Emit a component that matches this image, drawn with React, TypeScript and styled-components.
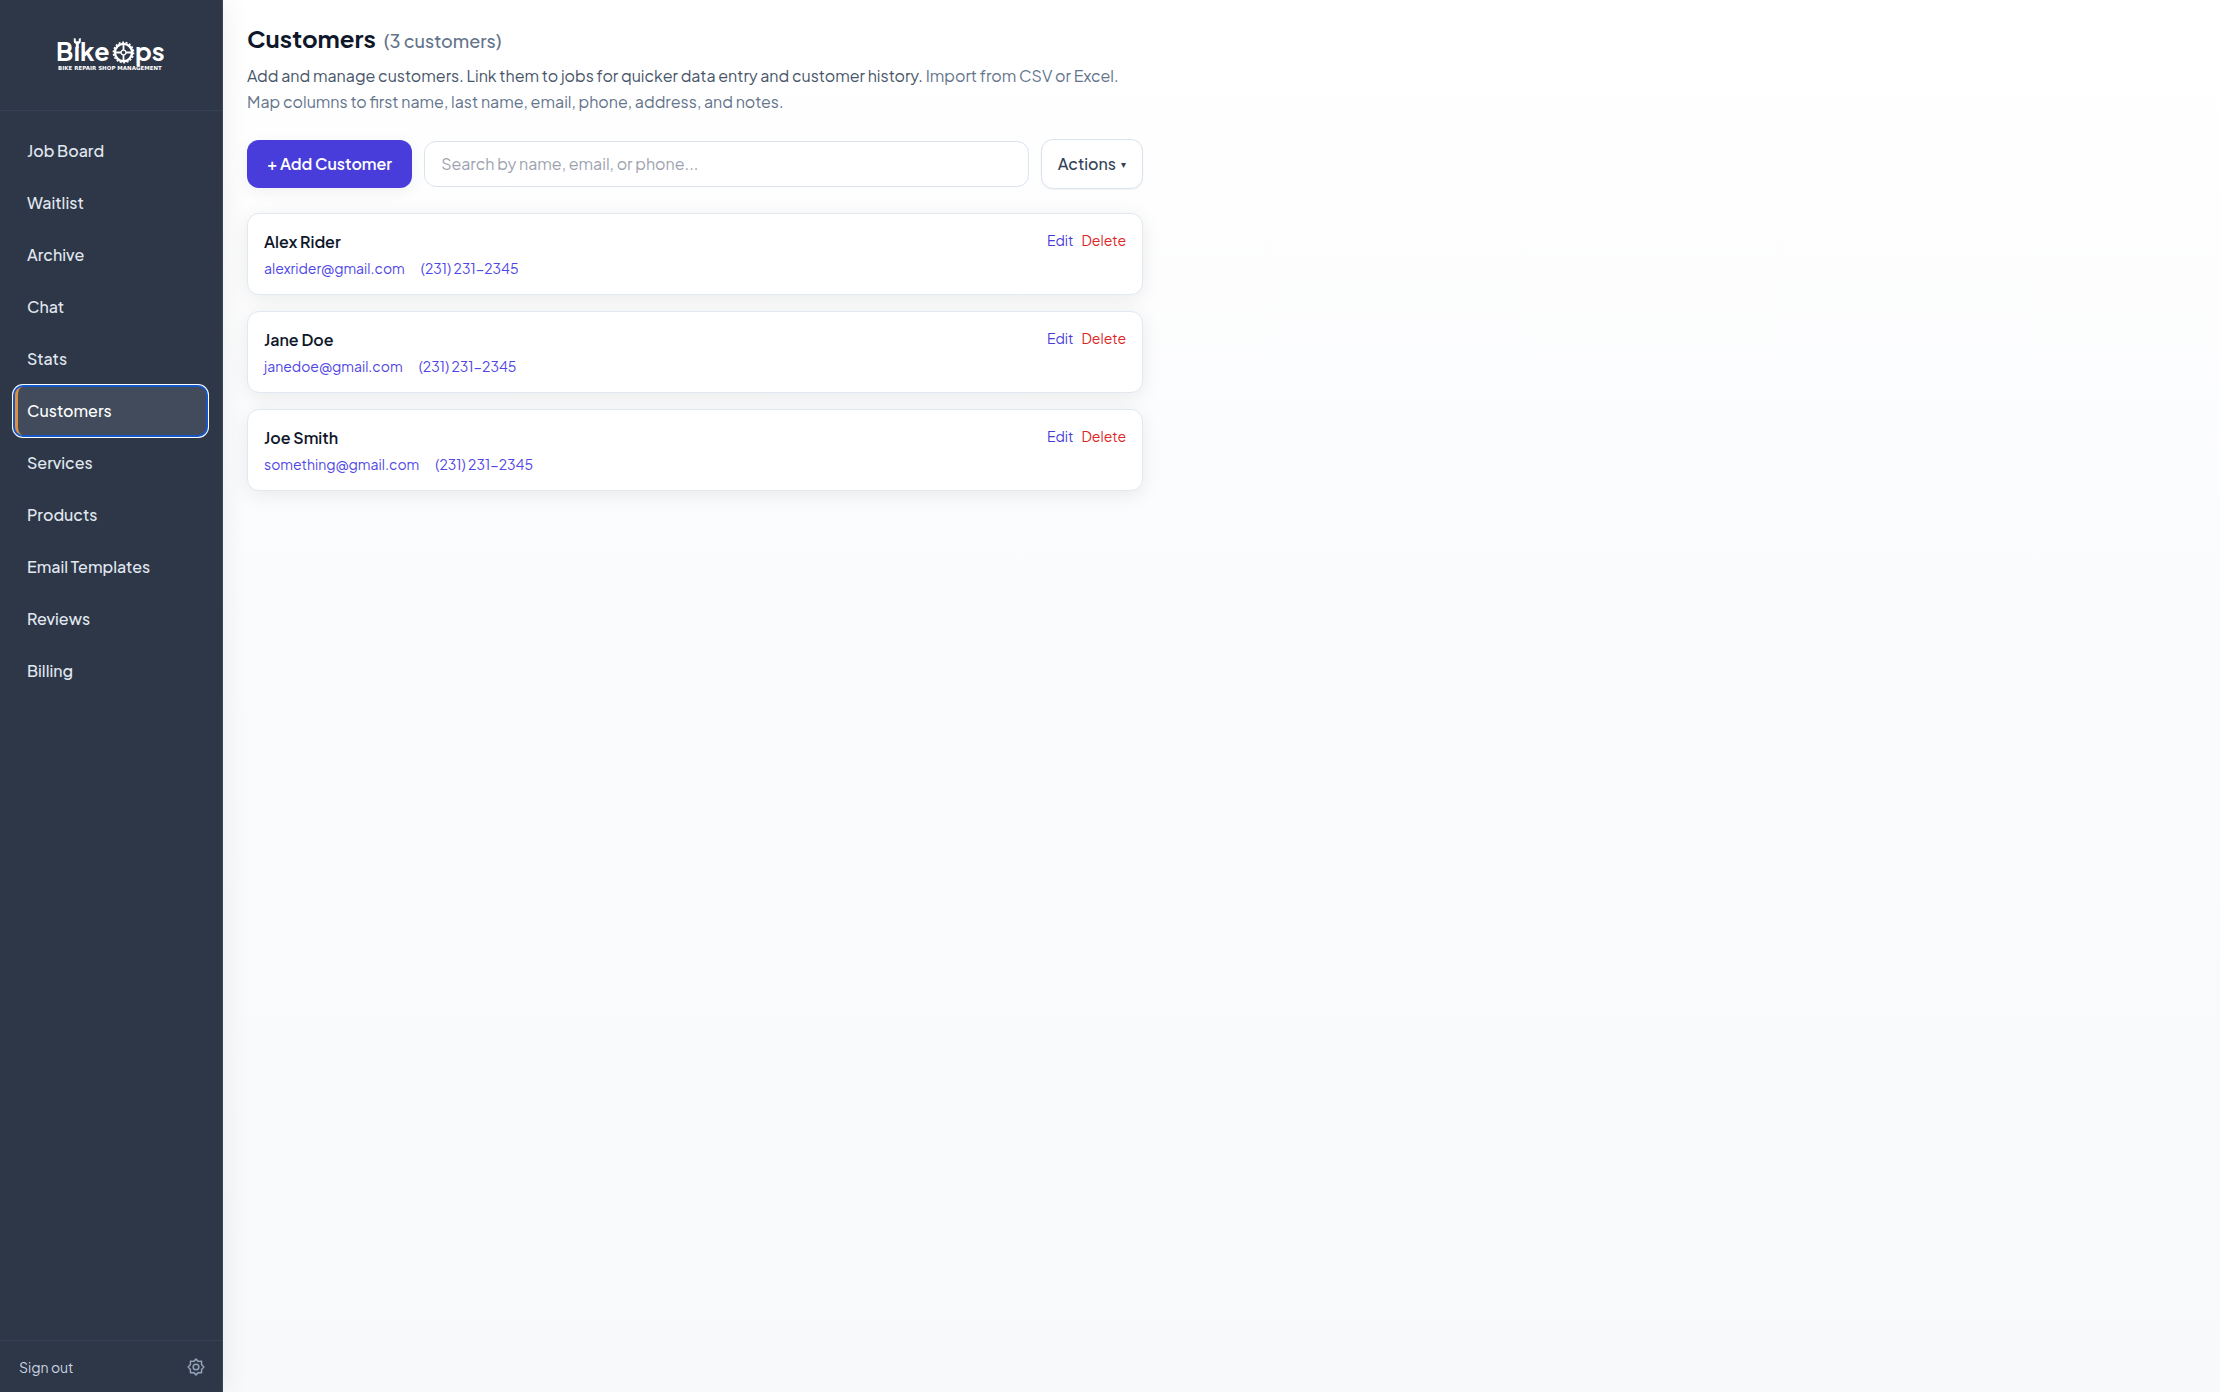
import React, { useState } from "react";
import styled, { createGlobalStyle } from "styled-components";

const GlobalStyle = createGlobalStyle`
  *, *::before, *::after { box-sizing: border-box; }
  body {
    margin: 0;
    font-family: "Plus Jakarta Sans", Inter, "Liberation Sans", sans-serif;
    font-size: 16px;
    line-height: 26px;
    color: #0f172a;
    background: #f8fafc;
  }
  h1, h2, p, ul { margin: 0; padding: 0; }
  ul { list-style: none; }
  a { text-decoration: none; }
  button, input { font: inherit; }
`;

const Shell = styled.div`
  display: flex;
  min-height: 100vh;
  background: linear-gradient(180deg, #ffffff 0%, #fafbfd 50%, #f7f9fb 100%);
`;

const Sidebar = styled.aside`
  display: flex;
  flex-direction: column;
  flex: 0 0 223px;
  background: #2d3748;
  border-right: 1px solid #3b4658;
  box-shadow: 4px 0 24px rgba(0, 0, 0, 0.06);
`;

const Brand = styled.div`
  display: flex;
  justify-content: center;
  align-items: center;
  height: 111px;
  border-bottom: 1px solid #364154;
`;

const LogoSvg = styled.svg`
  display: block;
  width: 108px;
  height: 36px;
  overflow: visible;
  fill: #ffffff;
`;

const NavList = styled.ul`
  display: flex;
  flex-direction: column;
  flex: 1;
  gap: 4px;
  padding: 16px 16px 16px 15px;
`;

const NavLink = styled.a<{ $active?: boolean }>`
  display: flex;
  align-items: center;
  height: 48px;
  padding: 0 9px;
  border-left: 3px solid ${(p) => (p.$active ? "#dd8f3d" : "transparent")};
  border-radius: 8px;
  color: ${(p) => (p.$active ? "#ffffff" : "#e2e8f0")};
  background: ${(p) => (p.$active ? "#414b5b" : "transparent")};
  font-weight: 500;
  box-shadow: ${(p) => (p.$active ? "0 0 0 2px #1558c8, 0 0 0 3px #ffffff" : "none")};
`;

const SidebarFooter = styled.div`
  display: flex;
  align-items: center;
  justify-content: space-between;
  height: 52px;
  padding: 0 17px 0 19px;
  border-top: 1px solid #364154;
`;

const PlainButton = styled.button`
  display: flex;
  padding: 0;
  border: 0;
  background: none;
  cursor: pointer;
  font-size: 14px;
  line-height: 20px;
  color: #cbd5e0;
`;

const GearIcon = styled.svg`
  display: block;
  width: 18px;
  height: 18px;
  fill: none;
  stroke: #94a3b8;
  stroke-width: 2;
  stroke-linecap: round;
  stroke-linejoin: round;
`;

const Main = styled.main`
  flex: 1;
  min-width: 0;
  padding: 24px;
`;

const Content = styled.div`
  max-width: 896px;
`;

const Title = styled.h1`
  display: flex;
  align-items: baseline;
  gap: 8px;
  font-size: 24px;
  line-height: 28px;
  font-weight: 700;
`;

const Count = styled.span`
  font-size: 18px;
  font-weight: 500;
  color: #64748b;
`;

const Intro = styled.p`
  margin-top: 8px;
  color: #475569;
`;

const Muted = styled.span`
  color: #64748b;
`;

const Toolbar = styled.div`
  display: flex;
  align-items: center;
  gap: 12px;
  margin: 24px 0;
`;

const AddButton = styled.button`
  height: 48px;
  padding: 0 20px;
  border: 0;
  border-radius: 12px;
  background: #483dda;
  color: #ffffff;
  font-weight: 600;
  box-shadow: 0 4px 16px rgba(0, 0, 0, 0.06);
`;

const SearchInput = styled.input`
  flex: 1;
  min-width: 0;
  height: 46px;
  padding: 0 16px 2px;
  border: 1px solid #dbe3ee;
  border-radius: 12px;
  background: #ffffff;
  color: #0f172a;
  &::placeholder { color: #9ca3af; opacity: 1; }
`;

const ActionsButton = styled.button`
  display: flex;
  align-items: center;
  gap: 5px;
  height: 50px;
  padding: 0 16px;
  border: 1px solid #dbe3ee;
  border-radius: 12px;
  background: #ffffff;
  color: #334155;
  font-weight: 500;
  box-shadow: 0 1px 2px rgba(0, 0, 0, 0.05);
`;

const Caret = styled.span`
  font-size: 10px;
`;

const CustomerList = styled.ul`
  display: flex;
  flex-direction: column;
  gap: 16px;
`;

const Card = styled.li`
  display: flex;
  justify-content: space-between;
  align-items: flex-start;
  padding: 16px;
  border: 1px solid #e2e8f0;
  border-radius: 12px;
  background: #ffffff;
  box-shadow: 0 4px 20px rgba(0, 0, 0, 0.08);
`;

const Name = styled.h2`
  font-size: 16px;
  line-height: 24px;
  font-weight: 600;
`;

const Row = styled.div<{ $gap: number }>`
  display: flex;
  gap: ${(p) => p.$gap}px;
  font-size: 14px;
  line-height: 20px;
`;

const Contact = styled(Row)`
  margin-top: 4px;
`;

const ContactLink = styled.a`
  color: #4f46e5;
`;

const CardAction = styled(PlainButton)<{ $danger?: boolean }>`
  color: ${(p) => (p.$danger ? "#dc2626" : "#483dda")};
`;

const navItems = [
  "Job Board", "Waitlist", "Archive", "Chat", "Stats", "Customers",
  "Services", "Products", "Email Templates", "Reviews", "Billing",
];

const customers = [
  { name: "Alex Rider", email: "alexrider@gmail.com", phone: "(231) 231-2345" },
  { name: "Jane Doe", email: "janedoe@gmail.com", phone: "(231) 231-2345" },
  { name: "Joe Smith", email: "something@gmail.com", phone: "(231) 231-2345" },
];

function Logo() {
  return (
    <LogoSvg viewBox="0 0 108 36" role="img" aria-label="BikeOps">
      <text x="-1" y="24" fontSize="25" fontWeight="700">
        B<tspan x="17">ı</tspan><tspan x="23">ke</tspan>
      </text>
      <text x="78" y="24" fontSize="25" fontWeight="700">ps</text>
      <path d="M16.800 1v3.200c0 1.500 1 2.300 2 2.700V11h3V6.900c1-.4 2-1.200 2-2.700V1l-2 .8v2.400h-3V1.800z" />
      <g fill="none" stroke="#ffffff">
        <circle cx="66.500" cy="15.500" r="8.600" strokeWidth="2.400" />
        <circle cx="66.500" cy="15.500" r="10.200" strokeWidth="1.400" strokeDasharray="2 1.560" />
        <circle cx="66.500" cy="15.500" r="2.400" strokeWidth="1.200" />
        <path d="M66.500 7v6M66.500 18v6M58 15.500h6M69 15.500h6" strokeWidth="1.800" />
      </g>
      <text x="1" y="33" fontSize="5.500" fontFamily='"DejaVu Sans", sans-serif' fontWeight="700">BIKE REPAIR SHOP MANAGEMENT</text>
    </LogoSvg>
  );
}

export default function App() {
  const [query, setQuery] = useState("");
  const shown = customers.filter((c) =>
    `${c.name} ${c.email} ${c.phone}`.toLowerCase().includes(query.toLowerCase())
  );
  return (
    <>
      <GlobalStyle />
      <Shell>
        <Sidebar>
          <Brand><Logo /></Brand>
          <NavList>
            {navItems.map((item) => (
              <li key={item}>
                <NavLink href="#" $active={item === "Customers"}>{item}</NavLink>
              </li>
            ))}
          </NavList>
          <SidebarFooter>
            <PlainButton type="button">Sign out</PlainButton>
            <PlainButton type="button" aria-label="Settings">
              <GearIcon viewBox="0 0 24 24">
                <path d="M12 1.500l3 3 4.400-.1.100 4.600 3 3-3 3-.1 4.600-4.400-.1-3 3-3-3-4.400.1-.1-4.600-3-3 3-3 .1-4.600 4.400.1z" />
                <circle cx="12" cy="12" r="3.800" />
              </GearIcon>
            </PlainButton>
          </SidebarFooter>
        </Sidebar>
        <Main>
          <Content>
            <Title>Customers <Count>(3 customers)</Count></Title>
            <Intro>
              Add and manage customers. Link them to jobs for quicker data entry and customer history.{" "}
              <Muted>Import from CSV or Excel. Map columns to first name, last name, email, phone, address, and notes.</Muted>
            </Intro>
            <Toolbar>
              <AddButton type="button">+ Add Customer</AddButton>
              <SearchInput
                type="search"
                aria-label="Search customers"
                placeholder="Search by name, email, or phone..."
                value={query}
                onChange={(e) => setQuery(e.target.value)}
              />
              <ActionsButton type="button">Actions <Caret>▾</Caret></ActionsButton>
            </Toolbar>
            <CustomerList>
              {shown.map((c) => (
                <Card key={c.name}>
                  <div>
                    <Name>{c.name}</Name>
                    <Contact $gap={16}>
                      <ContactLink href={`mailto:${c.email}`}>{c.email}</ContactLink>
                      <ContactLink href="tel:2312312345">{c.phone}</ContactLink>
                    </Contact>
                  </div>
                  <Row $gap={8}>
                    <CardAction type="button">Edit</CardAction>
                    <CardAction type="button" $danger>Delete</CardAction>
                  </Row>
                </Card>
              ))}
            </CustomerList>
          </Content>
        </Main>
      </Shell>
    </>
  );
}
